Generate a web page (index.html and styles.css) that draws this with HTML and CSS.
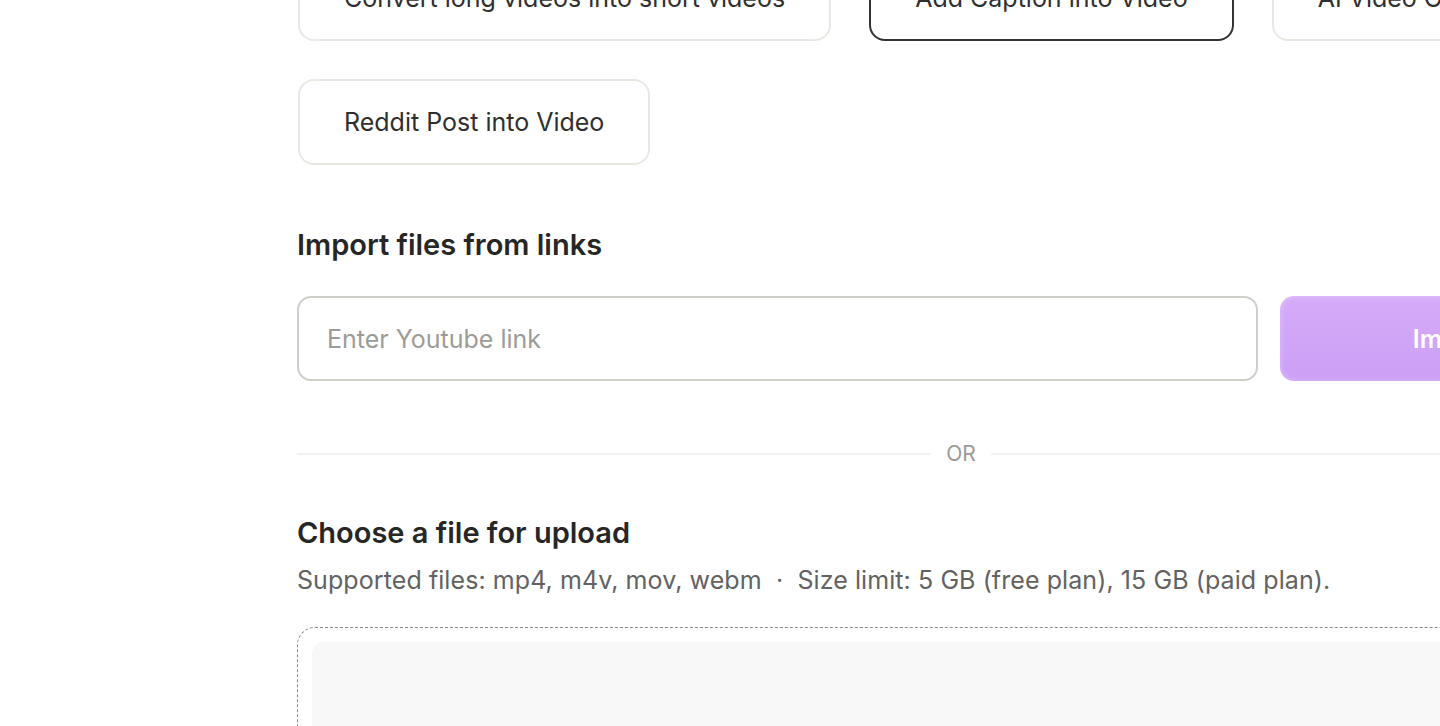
FILE: index.html
```html
<!DOCTYPE html>
<html lang="en">
<head>
    <meta charset="UTF-8">
    <meta name="viewport" content="width=device-width, initial-scale=1.0">
    <title>Upload video</title>
    <link rel="stylesheet" href="styles.css">
</head>
<body>

    <main class="page">

        <div class="presets">
            <button class="preset">Convert long videos into short videos</button>
            <button class="preset selected">Add Caption into Video</button>
            <button class="preset">AI Video Generator</button>
            <button class="preset">Reddit Post into Video</button>
        </div>

        <h2 class="section-title import-title">Import files from links</h2>

        <form class="import-row">
            <input type="text" class="link-input" placeholder="Enter Youtube link">
            <button type="submit" class="import-btn" disabled>Import</button>
        </form>

        <div class="divider"><span>OR</span></div>

        <h2 class="section-title">Choose a file for upload</h2>
        <p class="hint">Supported files: mp4, m4v, mov, webm &nbsp;·&nbsp; Size limit: 5 GB (free plan), 15 GB (paid plan).</p>

        <div class="dropzone">
            <div class="dropzone-inner"></div>
        </div>

    </main>

</body>
</html>
```

FILE: styles.css
```css
html, body {
    margin: 0;
    overflow: hidden;
    background: #fff;
}

body {
    font-family: Inter, "Noto Sans", Arial, sans-serif;
    color: #2b2b2b;
}

.page {
    width: 1328px;
    margin-top: -45px;
    margin-left: 297px;
}

.presets {
    display: flex;
    flex-wrap: wrap;
    gap: 38px;
    width: 1400px;
}

.preset {
    height: 86px;
    padding: 0 44px;
    background: #fff;
    border: 2px solid #e9e9e4;
    border-radius: 16px;
    font-family: inherit;
    font-size: 25px;
    color: #2f2f2f;
    cursor: pointer;
    box-sizing: border-box;
}

.preset:first-child,
.preset:nth-child(4) {
    margin-left: 1px;
}

.preset.selected {
    border-color: #333;
}

.section-title {
    margin: 49px 0 0;
    font-size: 29px;
    line-height: 36px;
    font-weight: 600;
    color: #262626;
}

.import-title {
    margin-top: 62px;
}

.import-row {
    display: flex;
    gap: 22px;
    margin-top: 33px;
}

.link-input {
    flex: 1;
    height: 85px;
    padding: 0 28px;
    border: 2px solid #cfcfca;
    border-radius: 14px;
    font-family: inherit;
    font-size: 25px;
    color: #2b2b2b;
    box-sizing: border-box;
    outline: none;
}

.link-input::placeholder {
    color: #9c9c97;
}

.import-btn {
    width: 345px;
    height: 85px;
    border: none;
    border-radius: 14px;
    background: linear-gradient(#d4abf8, #cc9ff5);
    box-shadow: inset 0 0 6px rgba(255, 255, 255, 0.35);
    color: #fff;
    font-family: inherit;
    font-size: 25px;
    font-weight: 600;
}

.divider {
    display: flex;
    align-items: center;
    gap: 15px;
    margin-top: 61px;
    font-size: 21px;
    line-height: 24px;
    color: #9a9a96;
}

.divider::before,
.divider::after {
    content: "";
    flex: 1;
    height: 2px;
    background: #f2f2ee;
}

.hint {
    margin: 13px 0 0;
    font-size: 25px;
    line-height: 32px;
    letter-spacing: 0.08px;
    color: #626262;
}

.dropzone {
    margin-top: 31px;
    padding: 14px;
    height: 300px;
    border: 1px dashed #8a8a8a;
    border-radius: 18px;
}

.dropzone-inner {
    height: 100%;
    background: #f8f8f8;
    border-radius: 12px;
}
```
